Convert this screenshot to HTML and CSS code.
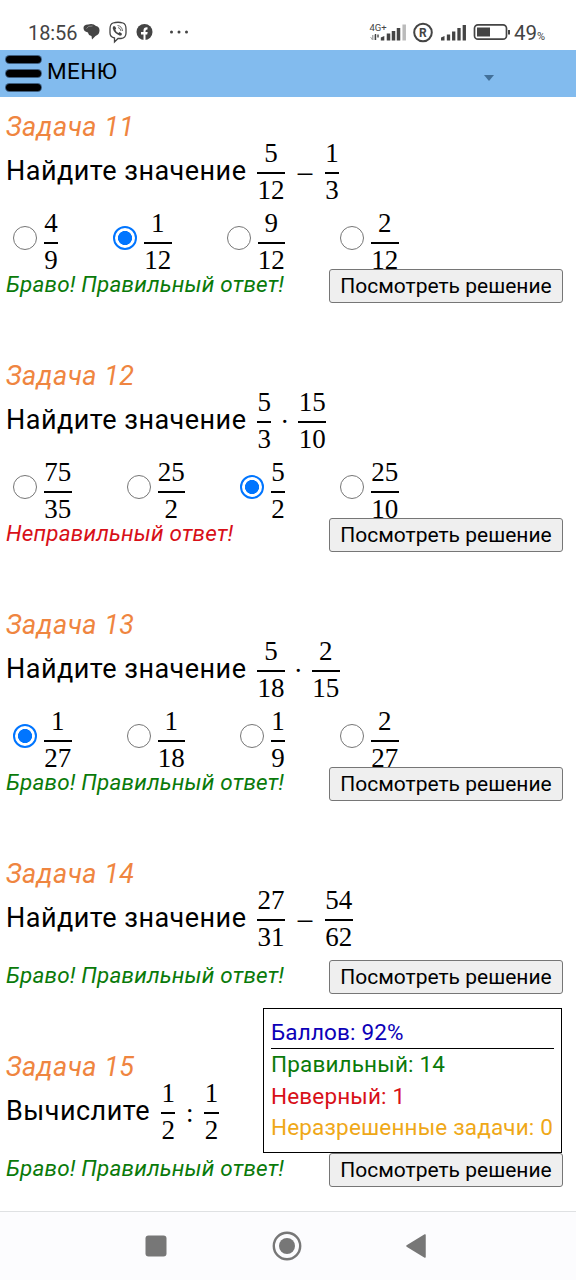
FILE: index.html
```html
<!DOCTYPE html>
<html lang="ru">
<head>
<meta charset="utf-8">
<title>Тест</title>
<link rel="stylesheet" href="styles.css">
</head>
<body>
<header class="status">
  <span class="clock">18:56</span>
  <svg class="apps" width="120" height="24" viewBox="0 0 120 24">
    <path d="M.5 8Q.5 4.500 5 4.500q5-1.500 8 1.500 3.500.5 3.500 4.500 0 4-4 5.500L9 19.500 8.500 16Q5.500 15.500 5 12.500.5 11.500.5 8z" fill="#444"/><path d="M3.500 8.500Q5 5.500 9.500 6" fill="none" stroke="#999" stroke-width=".8"/>
    <path d="M30 3q5-1.500 10 0 3 1 3 6v4q0 5-5 5.500h-3l-3.500 3.500v-4q-4.500-1-4.500-5v-4q0-5 3-6z" fill="none" stroke="#444" stroke-width="1.300"/><path d="M31 6q1.500 0 2.200 2.500l-.9 1.300q.9 2.700 3.200 3.200l1.200-1 2.300 1.700q0 2-2 2-6-2.200-7.300-7.400 0-1.800 1.300-2.300z" fill="#444"/><path d="M34.500 5.500q4.500.5 5 5.500M35 7.500q2.500.5 3 3.500" fill="none" stroke="#444" stroke-width=".8"/>
    <circle cx="61.500" cy="12" r="8" fill="#444"/><path d="M60.500 20.500v-6H58V12h2.500v-1.500q0-3.500 4-3.200v2.200q-2-.2-2 1.500v1h2.200l-.5 2.500h-1.700v6z" fill="#fff"/>
    <circle cx="88.500" cy="12" r="1.500" fill="#444"/><circle cx="96" cy="12" r="1.500" fill="#444"/><circle cx="103.500" cy="12" r="1.500" fill="#444"/>
  </svg>
  <svg class="signals" width="146" height="24" viewBox="368 20 146 24">
    <text x="369.500" y="30.500" class="net">4G+</text>
    <path d="M374 35v5M370.500 37l2 3V35" stroke="#aaa" fill="none"/><path d="M375.500 34v6M378 34.500v3" stroke="#444" stroke-width="1.400"/>
    <path d="M380.800 40.500v-3l3.500-1.500v4.500z" fill="#444"/><path d="M388.500 33.500v7M393.500 31v9.500M398.500 28v12.500" stroke="#444" stroke-width="3.500"/><path d="M404.200 24.500v16" stroke="#bbb" stroke-width="3.500"/>
    <circle cx="423" cy="32.500" r="8.800" fill="none" stroke="#444" stroke-width="2"/><text x="419" y="37" class="reg">R</text>
    <path d="M441 40.500v-3l3.500-1.500v4.500z" fill="#444"/><path d="M448.500 34.500v6M453.700 31.500v9M459 28v12.500M464.300 25v15.500" stroke="#444" stroke-width="3.300"/>
    <rect x="474.500" y="24.800" width="32" height="14.400" rx="3.500" fill="none" stroke="#444" stroke-width="1.700"/><rect x="477" y="27.500" width="13" height="9" fill="#444"/><path d="M509 30v4.500" stroke="#444" stroke-width="2"/>
  </svg>
  <span class="charge">49<small>%</small></span>
</header>
<nav class="menu">
  <svg width="37" height="37" viewBox="0 0 37 37"><g fill="#3f5f80"><rect x="0" y="0" width="37" height="9" rx="4.500"/><rect x="0" y="14" width="37" height="9" rx="4.500"/><rect x="0" y="28" width="37" height="9" rx="4.500"/></g><g><rect x="1" y="1" width="35" height="7" rx="3.500"/><rect x="1" y="15" width="35" height="7" rx="3.500"/><rect x="1" y="29" width="35" height="7" rx="3.500"/></g></svg>
  <span class="menu-label">МЕНЮ</span>
  <svg class="caret" width="10" height="6" viewBox="0 0 10 6"><path d="M0 0h10L5 6z" fill="#427099"/></svg>
</nav>
<main class="tasks">
  <section class="task">
    <h2>Задача 11</h2>
    <div class="question"><span class="prompt">Найдите значение</span><span class="frac"><span>5</span><span>12</span></span><span class="op minus">−</span><span class="frac"><span>1</span><span>3</span></span></div>
    <div class="options">
      <label><input type="radio" name="t11"><span class="frac"><span>4</span><span>9</span></span></label>
      <label><input type="radio" name="t11" checked><span class="frac"><span>1</span><span>12</span></span></label>
      <label><input type="radio" name="t11"><span class="frac"><span>9</span><span>12</span></span></label>
      <label><input type="radio" name="t11"><span class="frac"><span>2</span><span>12</span></span></label>
    </div>
    <div class="result"><span class="verdict">Браво! Правильный ответ!</span><button>Посмотреть решение</button></div>
  </section>
  <section class="task">
    <h2>Задача 12</h2>
    <div class="question"><span class="prompt">Найдите значение</span><span class="frac"><span>5</span><span>3</span></span><span class="op dot">·</span><span class="frac"><span>15</span><span>10</span></span></div>
    <div class="options">
      <label><input type="radio" name="t12"><span class="frac"><span>75</span><span>35</span></span></label>
      <label><input type="radio" name="t12"><span class="frac"><span>25</span><span>2</span></span></label>
      <label><input type="radio" name="t12" checked><span class="frac"><span>5</span><span>2</span></span></label>
      <label><input type="radio" name="t12"><span class="frac"><span>25</span><span>10</span></span></label>
    </div>
    <div class="result"><span class="verdict wrong">Неправильный ответ!</span><button>Посмотреть решение</button></div>
  </section>
  <section class="task">
    <h2>Задача 13</h2>
    <div class="question"><span class="prompt">Найдите значение</span><span class="frac"><span>5</span><span>18</span></span><span class="op dot">·</span><span class="frac"><span>2</span><span>15</span></span></div>
    <div class="options">
      <label><input type="radio" name="t13" checked><span class="frac"><span>1</span><span>27</span></span></label>
      <label><input type="radio" name="t13"><span class="frac"><span>1</span><span>18</span></span></label>
      <label><input type="radio" name="t13"><span class="frac"><span>1</span><span>9</span></span></label>
      <label><input type="radio" name="t13"><span class="frac"><span>2</span><span>27</span></span></label>
    </div>
    <div class="result"><span class="verdict">Браво! Правильный ответ!</span><button>Посмотреть решение</button></div>
  </section>
  <section class="task">
    <h2>Задача 14</h2>
    <div class="question"><span class="prompt">Найдите значение</span><span class="frac"><span>27</span><span>31</span></span><span class="op minus">−</span><span class="frac"><span>54</span><span>62</span></span></div>
    <div class="result"><span class="verdict">Браво! Правильный ответ!</span><button>Посмотреть решение</button></div>
  </section>
  <section class="task">
    <h2>Задача 15</h2>
    <div class="question"><span class="prompt short">Вычислите</span><span class="frac"><span>1</span><span>2</span></span><span class="op colon">:</span><span class="frac"><span>1</span><span>2</span></span></div>
    <div class="result"><span class="verdict">Браво! Правильный ответ!</span><button>Посмотреть решение</button></div>
  </section>
</main>
<aside class="score">
  <div class="points">Баллов: 92%</div>
  <div class="right">Правильный: 14</div>
  <div class="bad">Неверный: 1</div>
  <div class="open">Неразрешенные задачи: 0</div>
</aside>
<footer class="keys">
  <svg width="22" height="22" viewBox="0 0 22 22"><rect x=".5" y=".5" width="21" height="21" rx="3" fill="#777"/></svg>
  <svg width="30" height="30" viewBox="0 0 30 30"><circle cx="15" cy="15" r="13.200" fill="none" stroke="#777" stroke-width="2.400"/><circle cx="15" cy="15" r="8" fill="#777"/></svg>
  <svg width="20" height="26" viewBox="0 0 20 26"><path d="M1 13L19 2v22z" fill="#777" stroke="#777" stroke-width="1.500" stroke-linejoin="round"/></svg>
</footer>
</body>
</html>
```
FILE: styles.css
```css
* { box-sizing: border-box; }
body {
  margin: 0;
  height: 1280px;
  display: flex;
  flex-direction: column;
  overflow: hidden;
  position: relative;
  background: #fff;
  color: #000;
  font-family: Roboto, sans-serif;
}
svg { display: block; flex: none; }

.status {
  height: 50px;
  flex: none;
  display: flex;
  align-items: center;
  padding: 16px 0 0 28px;
  color: #444;
  font-size: 20px;
}
.clock { width: 55px; letter-spacing: -0.1px; }
.signals { margin-left: 165px; margin-top: -2px; }
.apps { margin-top: -2px; }
.charge { font-size: 20.500px; margin-left: 0; }
.charge small { font-size: 11px; }
.net { font-size: 9.500px; fill: #444; }
.reg { font-size: 12px; font-weight: 700; fill: #444; }

.menu {
  height: 47px;
  flex: none;
  display: flex;
  align-items: flex-start;
  padding: 5px 82px 0 5px;
  background: #82bbee;
}
.menu-label { margin-left: 5px; font-size: 22.500px; line-height: 32px; letter-spacing: 0.4px; }
.caret { margin-left: auto; margin-top: 20px; }

.tasks { flex: 1; min-height: 0; padding: 14px 13px 0 6px; }
.task { padding-bottom: 58px; }
.task h2 {
  margin: 0;
  color: #ef8540;
  font-size: 27px;
  line-height: 32px;
  font-weight: 400;
  font-style: italic;
  letter-spacing: 0.45px;
}
.question { height: 60px; margin-bottom: 10px; display: flex; white-space: nowrap; }
.prompt { width: 251px; font-size: 27px; line-height: 57px; letter-spacing: 0.48px; }
.prompt.short { width: 155px; }
.frac {
  display: inline-grid;
  grid-template-rows: 29px 31px;
  justify-items: center;
  padding: 0 0.4px;
  font: 27px/24px "Liberation Serif", serif;
  background: linear-gradient(#000, #000) 0 29px / 100% 2px no-repeat;
}
.frac span:first-child { margin-top: -2px; }
.frac span:last-child { margin-top: 6px; }
.op { text-align: center; font: 27px/60px "Liberation Serif", serif; }
.minus { width: 40px; font-size: 32px; line-height: 62px; }
.dot { width: 27px; }
.colon { width: 29px; }

.options { height: 56px; padding-left: 7px; display: flex; gap: 55px; }
.options label { display: flex; gap: 7px; height: 60px; }
.options .frac { padding: 0 0.25px; }
input {
  appearance: none;
  width: 24px;
  height: 24px;
  margin: 13px 0 0;
  border: 1.500px solid #767676;
  border-radius: 50%;
  background: #fff;
}
input:checked {
  border: 2px solid #0075ff;
  background: radial-gradient(circle, #0075ff 6.700px, #fff 7.400px);
}

.result { height: 33px; display: flex; align-items: flex-start; justify-content: space-between; }
.verdict { color: #0a7a0a; font-size: 22.500px; line-height: 31px; font-style: italic; letter-spacing: 0.18px; white-space: nowrap; }
.wrong { color: #d81018; }
button {
  position: relative;
  width: 234px;
  height: 34px;
  padding: 0;
  border: 1px solid #767676;
  border-radius: 3px;
  background: #efefef;
  color: #000;
  font: 21px/30px Roboto, sans-serif;
  white-space: nowrap;
}

.score {
  position: absolute;
  left: 263px;
  top: 1008px;
  width: 299px;
  height: 145px;
  padding: 8px 7px;
  border: 1px solid #000;
  background: #fff;
  font-size: 22.500px;
  line-height: 31.600px;
  letter-spacing: 0.16px;
  white-space: nowrap;
}
.points { height: 32px; color: #0c00b8; border-bottom: 1px solid #000; }
.right { color: #0a7a0a; }
.bad { color: #d81018; }
.open { color: #efa818; }

.keys {
  height: 69px;
  flex: none;
  display: flex;
  align-items: center;
  justify-content: space-between;
  padding: 0 150px 0 145px;
  border-top: 1px solid #dfe1e3;
  background: #fcfcfe;
}
```
